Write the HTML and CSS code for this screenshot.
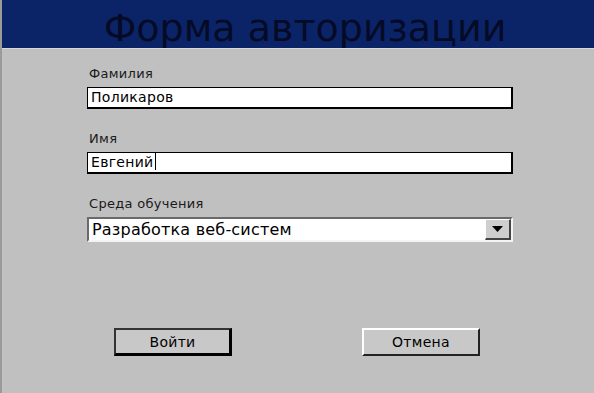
FILE: index.html
```html
<!DOCTYPE html>
<html>
  <head>
    <meta charset="UTF-8">
    <title>Форма авторизации</title>
    <link rel="stylesheet" href="styles.css">
  </head>
  <body>
    <div class="window">
      <div class="title-bar">
        <h1>Форма авторизации</h1>
      </div>
      <form class="auth-form">
        <div class="field">
          <label for="surname">Фамилия</label>
          <div class="text-box">Поликаров</div>
        </div>
        <div class="field">
          <label for="name">Имя</label>
          <div class="text-box">Евгений<span class="caret"></span></div>
        </div>
        <div class="field">
          <label for="env">Среда обучения</label>
          <div class="combo">
            <span class="combo-text">Разработка веб-систем</span>
            <span class="combo-btn">
              <svg width="11" height="6" viewBox="0 0 11 6"><path d="M0 0h11L5.5 6z" fill="#000"/></svg>
            </span>
          </div>
        </div>
        <div class="buttons">
          <button type="button" class="btn btn-default">Войти</button>
          <button type="button" class="btn">Отмена</button>
        </div>
      </form>
    </div>
  </body>
</html>
```

FILE: styles.css
```css
html {
  font-family: "DejaVu Sans", Verdana, sans-serif;
}
body {
  margin: 0;
  background: #c0c0c0;
}
.window {
  width: 594px;
  height: 393px;
  background: #c0c0c0;
  border-left: 2px solid #9a9a9a;
  box-sizing: border-box;
}
.title-bar {
  height: 48px;
  background: #0b2468;
  border-bottom: 1px solid #d8d8d8;
  display: flex;
  justify-content: center;
  padding-left: 14px;
  overflow: hidden;
}
.title-bar h1 {
  margin: 0;
  font-weight: normal;
  font-size: 38px;
  line-height: 56px;
  color: #050b26;
}
.auth-form {
  padding: 17px 0 0 85px;
}
.field {
  margin-bottom: 22px;
}
.field label {
  display: block;
  font-size: 13px;
  letter-spacing: 0.3px;
  color: #1a1a1a;
  margin-bottom: 6px;
  padding-left: 2px;
}
.text-box {
  width: 426px;
  height: 22px;
  box-sizing: border-box;
  background: #fff;
  border: 1px solid #000;
  border-right-width: 2px;
  border-bottom-width: 2px;
  font-size: 14px;
  letter-spacing: 0.3px;
  line-height: 19px;
  padding-left: 3px;
  color: #000;
}
.caret {
  display: inline-block;
  width: 1px;
  height: 17px;
  background: #000;
  vertical-align: -3px;
  margin-left: 1px;
}
.combo {
  width: 426px;
  height: 25px;
  box-sizing: border-box;
  background: #fff;
  border: 2px solid #6a6a6a;
  border-right-color: #f4f4f4;
  border-bottom-color: #f4f4f4;
  display: flex;
  align-items: center;
  justify-content: space-between;
  padding-left: 3px;
}
.combo-text {
  font-size: 16px;
  letter-spacing: 0.2px;
  color: #000;
}
.combo-btn {
  width: 26px;
  height: 21px;
  box-sizing: border-box;
  background: #cfcfcf;
  border: 1px solid #fff;
  border-right: 2px solid #444;
  border-bottom: 2px solid #444;
  display: flex;
  align-items: center;
  justify-content: center;
}
.buttons {
  display: flex;
  gap: 130px;
  padding: 64px 0 0 27px;
}
.btn {
  width: 118px;
  height: 28px;
  font-family: "DejaVu Sans", Verdana, sans-serif;
  font-size: 14px;
  letter-spacing: 0.3px;
  color: #000;
  background: #c8c8c8;
  border: 2px solid #fff;
  border-right-color: #222;
  border-bottom-color: #222;
  padding: 0;
}
.btn-default {
  border: 2px solid #000;
  border-top-color: #333;
  border-left-color: #333;
  border-right-width: 3px;
  border-bottom-width: 3px;
}
```
